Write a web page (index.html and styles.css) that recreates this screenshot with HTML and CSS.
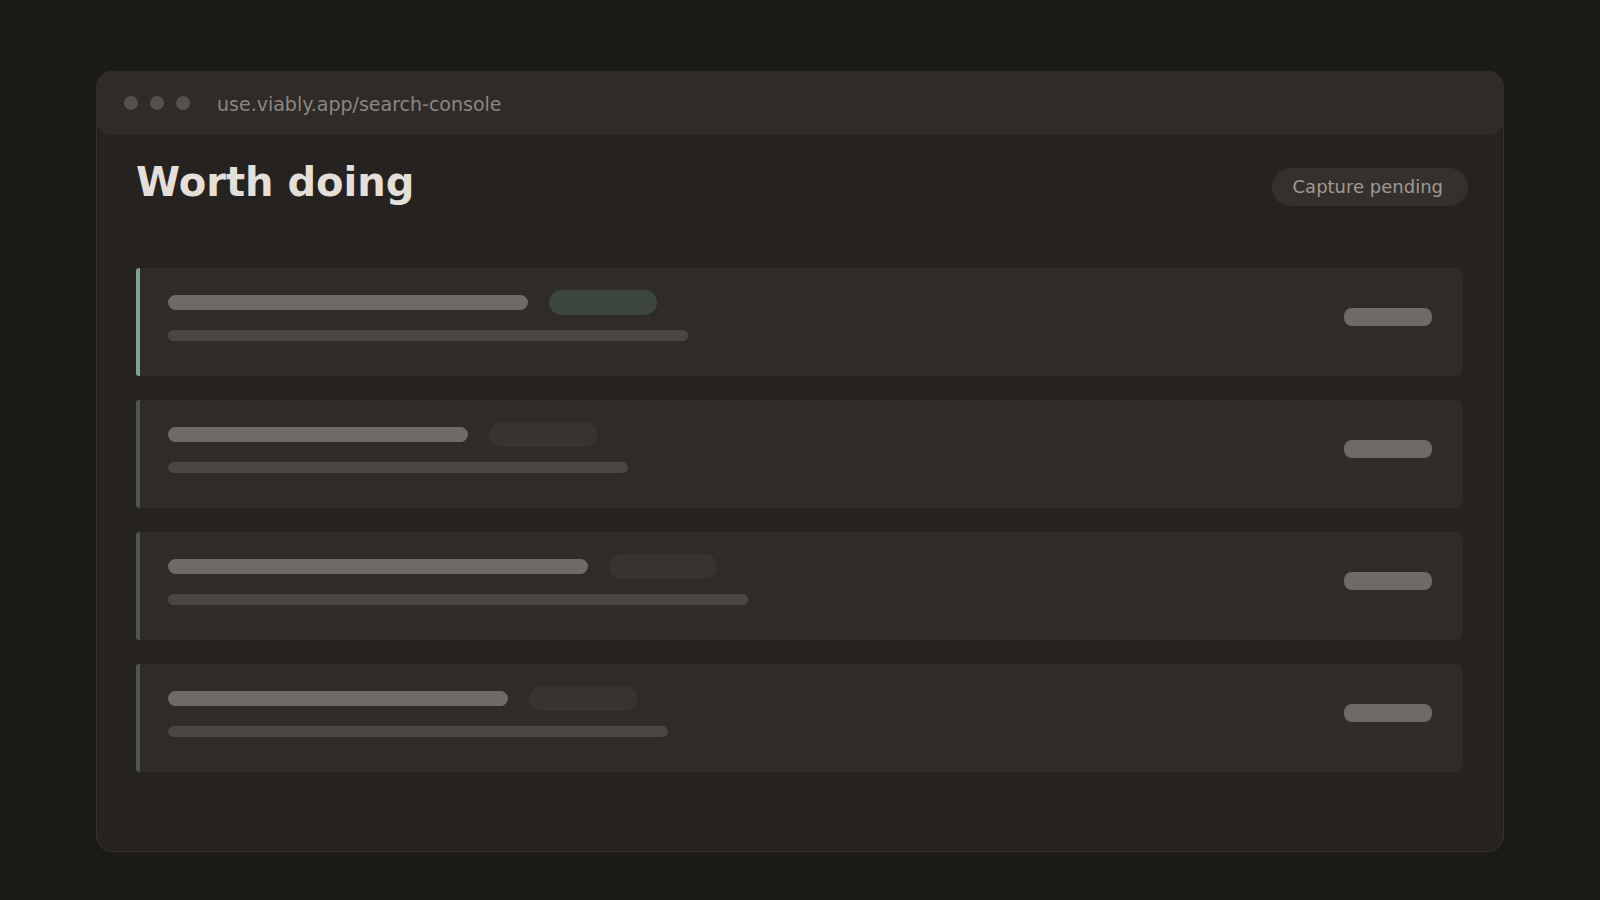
FILE: index.html
```html
<!DOCTYPE html>
<html lang="en">
<head>
    <meta charset="UTF-8">
    <meta name="viewport" content="width=device-width, initial-scale=1.0">
    <title>Worth doing</title>
    <link rel="stylesheet" href="styles.css">
</head>
<body>
    <div class="window">
        <div class="titlebar">
            <div class="dots">
                <span class="dot"></span>
                <span class="dot"></span>
                <span class="dot"></span>
            </div>
            <div class="url">use.viably.app/search-console</div>
        </div>

        <div class="content">
            <div class="header">
                <h1 class="title">Worth doing</h1>
                <div class="status">Capture pending</div>
            </div>

            <div class="list">
                <div class="row active">
                    <div class="row-main">
                        <div class="row-top">
                            <span class="bar bar-title" style="width: 360px"></span>
                            <span class="badge"></span>
                        </div>
                        <span class="bar bar-sub" style="width: 520px"></span>
                    </div>
                    <span class="bar bar-value"></span>
                </div>
                <div class="row">
                    <div class="row-main">
                        <div class="row-top">
                            <span class="bar bar-title" style="width: 300px"></span>
                            <span class="badge"></span>
                        </div>
                        <span class="bar bar-sub" style="width: 460px"></span>
                    </div>
                    <span class="bar bar-value"></span>
                </div>
                <div class="row">
                    <div class="row-main">
                        <div class="row-top">
                            <span class="bar bar-title" style="width: 420px"></span>
                            <span class="badge"></span>
                        </div>
                        <span class="bar bar-sub" style="width: 580px"></span>
                    </div>
                    <span class="bar bar-value"></span>
                </div>
                <div class="row">
                    <div class="row-main">
                        <div class="row-top">
                            <span class="bar bar-title" style="width: 340px"></span>
                            <span class="badge"></span>
                        </div>
                        <span class="bar bar-sub" style="width: 500px"></span>
                    </div>
                    <span class="bar bar-value"></span>
                </div>
            </div>
        </div>
    </div>
</body>
</html>
```

FILE: styles.css
```css
* {
    box-sizing: border-box;
}

body {
    margin: 0;
    padding: 0;
    background-color: #1c1a17;
    font-family: "DejaVu Sans", "Liberation Sans", sans-serif;
    height: 100vh;
    overflow: hidden;
}

.window {
    width: 1408px;
    height: 781px;
    margin: 71px auto 0;
    background-color: #25221f;
    border: 1px solid #35312e;
    border-radius: 16px;
}

.titlebar {
    display: flex;
    align-items: center;
    height: 64px;
    margin: -1px -1px 0;
    padding: 0 28px;
    background-color: #2f2b28;
    border-radius: 16px;
}

.dots {
    display: flex;
    gap: 12px;
}

.dot {
    width: 14px;
    height: 14px;
    border-radius: 50%;
    background-color: #56514d;
}

.url {
    margin-left: 27px;
    padding-top: 2px;
    font-size: 19px;
    color: #8c8681;
}

.content {
    padding: 25px 40px 0 39px;
}

.header {
    display: flex;
    justify-content: space-between;
    align-items: flex-start;
    height: 48px;
    margin-right: -5px;
}

.title {
    margin: -2px 0 0;
    font-size: 40px;
    line-height: 48px;
    font-weight: bold;
    color: #e4dfd9;
}

.status {
    height: 38px;
    line-height: 38px;
    margin-top: 8px;
    padding: 0 25px 0 21px;
    border-radius: 19px;
    background-color: #34302d;
    color: #a09a94;
    font-size: 18px;
}

.list {
    display: flex;
    flex-direction: column;
    gap: 24px;
    margin-top: 60px;
}

.row {
    display: flex;
    align-items: center;
    justify-content: space-between;
    height: 108px;
    padding: 22px 31px 35px 28px;
    background-color: #2f2b28;
    border-left: 4px solid #4b574d;
    border-radius: 3px 8px 8px 3px;
}

.row.active {
    border-left-color: #7ea585;
}

.row-main {
    display: flex;
    flex-direction: column;
    gap: 15px;
}

.row-top {
    display: flex;
    align-items: center;
    gap: 21px;
    height: 25px;
}

.bar {
    display: block;
    border-radius: 8px;
}

.bar-title {
    height: 15px;
    background-color: #6e6a66;
}

.bar-sub {
    height: 11px;
    background-color: #4a4643;
}

.bar-value {
    width: 88px;
    height: 18px;
    margin-top: 3px;
    background-color: #6e6a66;
}

.badge {
    display: block;
    width: 108px;
    height: 25px;
    border-radius: 13px;
    background-color: #373330;
}

.row.active .badge {
    background-color: #3c453e;
}
```
